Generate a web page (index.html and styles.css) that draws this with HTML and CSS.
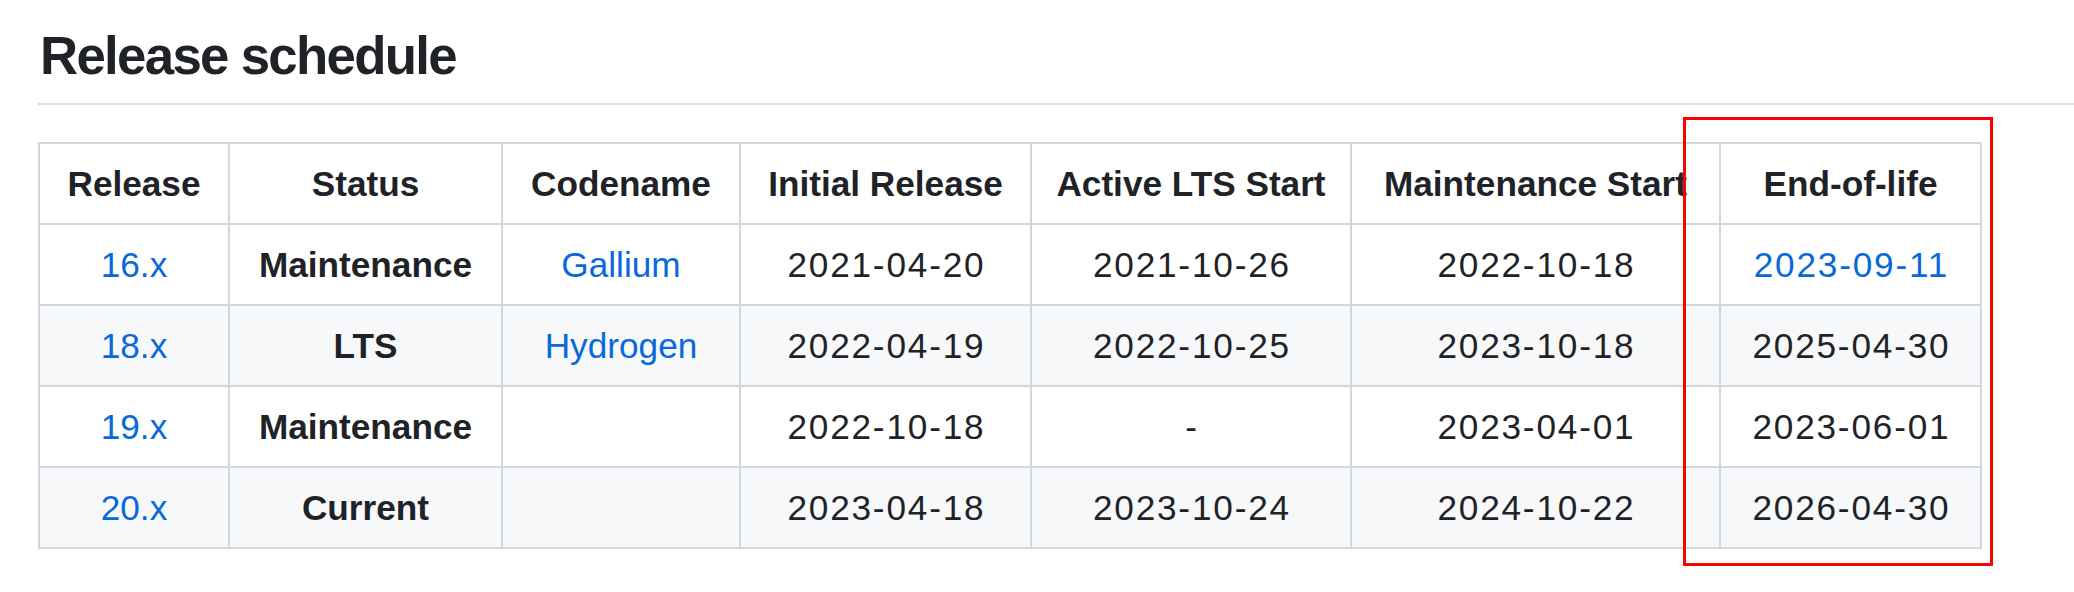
FILE: index.html
```html
<!DOCTYPE html>
<html lang="en">
<head>
<meta charset="utf-8">
<title>Release schedule</title>
<link rel="stylesheet" href="styles.css">
</head>
<body>
<main class="page">
  <h2 class="title">Release schedule</h2>
  <table class="schedule">
    <colgroup>
      <col class="c-release">
      <col class="c-status">
      <col class="c-codename">
      <col class="c-initial">
      <col class="c-active">
      <col class="c-maint">
      <col class="c-eol">
    </colgroup>
    <thead>
      <tr>
        <th>Release</th>
        <th>Status</th>
        <th>Codename</th>
        <th>Initial Release</th>
        <th>Active LTS Start</th>
        <th>Maintenance Start</th>
        <th>End-of-life</th>
      </tr>
    </thead>
    <tbody>
      <tr>
        <td><a href="#">16.x</a></td>
        <td><strong>Maintenance</strong></td>
        <td><a href="#">Gallium</a></td>
        <td class="date">2021-04-20</td>
        <td class="date">2021-10-26</td>
        <td class="date">2022-10-18</td>
        <td class="date"><a href="#">2023-09-11</a></td>
      </tr>
      <tr>
        <td><a href="#">18.x</a></td>
        <td><strong>LTS</strong></td>
        <td><a href="#">Hydrogen</a></td>
        <td class="date">2022-04-19</td>
        <td class="date">2022-10-25</td>
        <td class="date">2023-10-18</td>
        <td class="date">2025-04-30</td>
      </tr>
      <tr>
        <td><a href="#">19.x</a></td>
        <td><strong>Maintenance</strong></td>
        <td></td>
        <td class="date">2022-10-18</td>
        <td>-</td>
        <td class="date">2023-04-01</td>
        <td class="date">2023-06-01</td>
      </tr>
      <tr>
        <td><a href="#">20.x</a></td>
        <td><strong>Current</strong></td>
        <td></td>
        <td class="date">2023-04-18</td>
        <td class="date">2023-10-24</td>
        <td class="date">2024-10-22</td>
        <td class="date">2026-04-30</td>
      </tr>
    </tbody>
  </table>
  <div class="highlight" aria-hidden="true"></div>
</main>
</body>
</html>
```

FILE: styles.css
```css
html, body {
  margin: 0;
  padding: 0;
  background: #ffffff;
}

body {
  font-family: "Liberation Sans", Arial, sans-serif;
  color: #1f2328;
  font-size: 35.2px;
  line-height: 1.5;
}

.page {
  position: relative;
  padding: 21px 0 0 38px;
  min-height: 571px;
}

.title {
  margin: 0;
  padding: 2px 0 14px 2px;
  font-size: 52.8px;
  line-height: 66px;
  font-weight: 700;
  letter-spacing: -1.7px;
  border-bottom: 2px solid #d8dee4;
}

.schedule {
  margin-top: 37px;
  border-collapse: collapse;
  border-spacing: 0;
  table-layout: fixed;
  width: 1942px;
}

.c-release { width: 190px; }
.c-status { width: 273px; }
.c-codename { width: 238px; }
.c-initial { width: 291px; }
.c-active { width: 320px; }
.c-maint { width: 369px; }
.c-eol { width: 261px; }

.schedule th,
.schedule td {
  border: 2px solid #d0d7de;
  padding: 13px 0;
  line-height: 53px;
  text-align: center;
  white-space: nowrap;
  overflow: visible;
}

.schedule th {
  font-weight: 700;
}

.schedule strong {
  font-weight: 700;
}

.schedule .date {
  letter-spacing: 1.8px;
  text-indent: 1.8px;
}

.schedule tbody tr:nth-child(2n) {
  background: #f6f8fa;
}

.schedule a {
  color: #0969da;
  text-decoration: none;
}

.highlight {
  position: absolute;
  left: 1683px;
  top: 117px;
  width: 310px;
  height: 449px;
  box-sizing: border-box;
  border: 3px solid #ff0000;
  pointer-events: none;
}
```
